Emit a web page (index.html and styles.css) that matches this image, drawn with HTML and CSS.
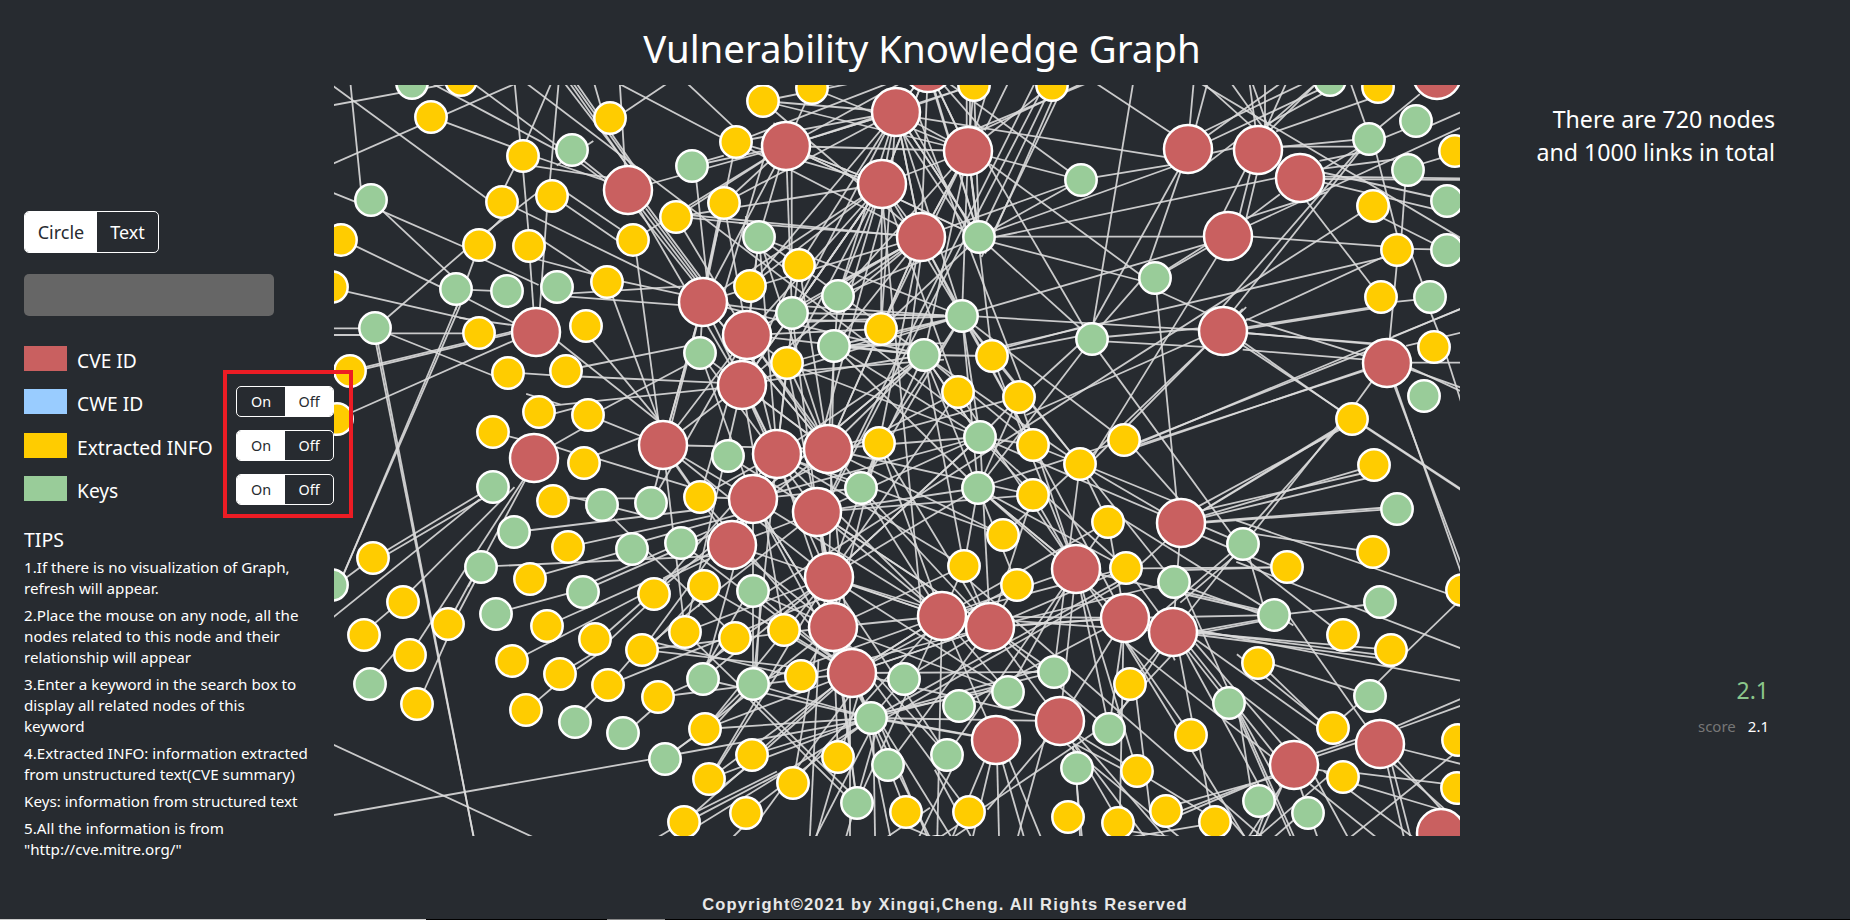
FILE: index.html
```html
<!DOCTYPE html>
<html lang="en">
<head>
<meta charset="utf-8">
<title>Vulnerability Knowledge Graph</title>
<link rel="stylesheet" href="styles.css">
</head>
<body>
<div class="page">
  <header class="title-bar"><h1 class="title">Vulnerability Knowledge Graph</h1></header>
  <main class="content">
    <aside class="sidebar">
      <div class="seg seg-wide">
        <span class="seg-item seg-active">Circle</span>
        <span class="seg-item">Text</span>
      </div>
      <input class="search" type="text" aria-label="Search">
      <div class="filters">
        <ul class="legend">
          <li class="legend-row"><i class="swatch swatch-cve"></i><span class="legend-label">CVE ID</span></li>
          <li class="legend-row"><i class="swatch swatch-cwe"></i><span class="legend-label">CWE ID</span></li>
          <li class="legend-row"><i class="swatch swatch-info"></i><span class="legend-label">Extracted INFO</span></li>
          <li class="legend-row"><i class="swatch swatch-keys"></i><span class="legend-label">Keys</span></li>
        </ul>
        <div class="toggles">
          <div class="seg seg-small">
            <span class="seg-item">On</span>
            <span class="seg-item seg-active">Off</span>
          </div>
          <div class="seg seg-small">
            <span class="seg-item seg-active">On</span>
            <span class="seg-item">Off</span>
          </div>
          <div class="seg seg-small">
            <span class="seg-item seg-active">On</span>
            <span class="seg-item">Off</span>
          </div>
        </div>
        <div class="highlight"></div>
      </div>
      <section class="tips">
        <h2 class="tips-title">TIPS</h2>
        <p>1.If there is no visualization of Graph,<br>refresh will appear.</p>
        <p>2.Place the mouse on any node, all the<br>nodes related to this node and their<br>relationship will appear</p>
        <p>3.Enter a keyword in the search box to<br>display all related nodes of this<br>keyword</p>
        <p>4.Extracted INFO: information extracted<br>from unstructured text(CVE summary)</p>
        <p>Keys: information from structured text</p>
        <p>5.All the information is from<br>"http://cve.mitre.org/"</p>
      </section>
    </aside>
    <svg id="graph" class="graph" viewBox="334 85 1126 751" aria-label="Knowledge graph"></svg>
    <aside class="stats">
      <p class="totals">There are 720 nodes<br>and 1000 links in total</p>
      <div class="score-big">2.1</div>
      <div class="score-row"><span class="score-label">score</span><span class="score-value">2.1</span></div>
    </aside>
  </main>
  <footer class="footer">
    <div class="copyright">Copyright©2021 by Xingqi,Cheng. All Rights Reserved</div>
    <div class="strip"><i class="strip-a"></i><i class="strip-b"></i><i class="strip-c"></i></div>
  </footer>
</div>
<script src="graph.js"></script>
</body>
</html>
```
FILE: styles.css
```css
* { box-sizing: border-box; }
html, body { margin: 0; height: 100%; }
body {
  background: #272b30;
  color: #fff;
  font-family: "Noto Sans", "Open Sans", sans-serif;
  overflow: hidden;
}
.page { display: grid; grid-template-rows: 85px 751px 84px; height: 920px; }
.title-bar { text-align: center; padding-right: 6px; }
.title { margin: 0; padding-top: 22px; font-size: 38.4px; line-height: 52px; font-weight: 400; }
.content { display: grid; grid-template-columns: 334px 1126px 390px; min-height: 0; }
.sidebar { position: relative; z-index: 2; padding: 126px 0 0 24px; }
.seg { display: flex; border: 1px solid #fff; border-radius: 5px; overflow: hidden; }
.seg-item { display: flex; align-items: center; justify-content: center; }
.seg-active { background: #fff; color: #272b30; }
.seg-wide { width: 135px; height: 42px; font-size: 18px; }
.seg-wide .seg-item:first-child { width: 72px; }
.seg-wide .seg-item:last-child { flex: 1; }
.seg-small { width: 98px; height: 31px; font-size: 14.4px; }
.seg-small .seg-item { flex: 1; }
.search { display: block; width: 250px; height: 42px; margin: 21px 0 30px; background: #666; border: 0; border-radius: 5px; }
.filters { position: relative; display: flex; }
.legend { width: 212px; margin: 0; padding: 0; list-style: none; display: flex; flex-direction: column; gap: 18.33px; }
.legend-row { display: flex; align-items: center; height: 25px; font-size: 19.2px; white-space: nowrap; }
.legend-label { padding-top: 4px; }
.swatch { width: 43px; height: 25px; margin-right: 10px; }
.swatch-cve { background: #c96060; }
.swatch-cwe { background: #99ccff; }
.swatch-info { background: #ffcc00; }
.swatch-keys { background: #99cc99; }
.toggles { display: flex; flex-direction: column; gap: 13px; padding-top: 40px; }
.highlight { position: absolute; left: 199px; top: 24px; width: 130px; height: 148px; border: 4px solid #ed1c24; pointer-events: none; }
.tips { margin-top: 20px; white-space: nowrap; }
.tips-title { margin: 0 0 2px; font-size: 19.5px; line-height: 30px; font-weight: 400; }
.tips p { margin: 0 0 6px; font-size: 15.2px; line-height: 21px; }
.graph { display: block; width: 1126px; height: 751px; }
.link { stroke: #dcdcdc; stroke-width: 1.8; opacity: .9; }
.node { stroke: #fff; stroke-width: 2.5; }
.node-r { fill: #c96060; }
.node-y { fill: #ffcc00; }
.node-g { fill: #99cc99; }
.stats { padding: 18px 81px 0 0; text-align: right; }
.totals { margin: 0 -6px 0 0; font-size: 23.2px; line-height: 33px; }
.score-big { margin-top: 503px; font-size: 23px; line-height: 36px; color: #8bc78b; }
.score-row { margin-top: 8px; font-size: 15px; line-height: 21px; }
.score-label { margin-right: 12px; color: #777; }
.footer { display: flex; flex-direction: column; justify-content: flex-end; }
.copyright { flex: 1; padding: 58px 0 0 40px; text-align: center; font: 700 16.5px/20px "Liberation Sans", Arial, sans-serif; letter-spacing: 1.17px; color: #e8e8e8; }
.strip { display: flex; height: 1px; background: #000; }
.strip i { display: block; height: 1px; }
.strip-a { width: 426px; background: #ccc; }
.strip-b { width: 181px; background: #000; }
.strip-c { width: 58px; background: #888; }
```
FILE: graph.js
```js
var NODES = {
  r: "786,146 628,190 703,302 747,335 536,332 742,385 534,458 663,445 777,454 753,499 828,449 817,512 896,112 928,68 968,151 882,184 921,237 1188,149 1258,150 1300,178 1228,236 1223,331 829,577 833,627 732,545 1076,569 1181,523 942,616 990,627 1125,618 1173,632 852,673 1060,721 996,740 1437,75 1387,363 1380,744 1294,765 1441,833",
  y: "461,80 431,117 523,156 610,118 763,101 736,142 724,203 676,217 799,265 633,240 552,196 502,202 341,240 479,245 529,246 607,282 750,286 332,287 586,326 479,333 350,371 787,363 508,373 566,371 337,419 539,412 588,415 493,432 584,463 553,501 700,497 812,88 974,85 1052,85 881,329 992,356 958,392 1019,397 879,443 1033,445 1080,464 1124,440 1033,495 568,547 530,579 654,594 704,586 373,558 403,602 448,624 547,626 595,639 642,650 685,632 735,638 784,630 364,635 410,655 512,661 560,674 608,685 801,676 658,697 417,704 526,710 705,729 752,755 709,779 793,783 746,813 684,822 1108,522 1003,535 964,566 1017,585 1126,568 1287,567 1258,663 1130,684 1191,735 838,757 1137,771 906,812 969,812 1068,817 1166,811 1118,823 1215,822 1378,87 1455,151 1373,206 1397,250 1381,297 1434,347 1352,419 1374,465 1373,552 1343,635 1391,650 1333,728 1343,777 1458,740 1457,788 1462,590 937,852 1255,852",
  g: "412,83 572,150 692,166 759,237 371,200 456,289 507,291 557,287 792,313 375,328 700,353 728,456 493,487 602,505 651,503 1081,180 979,237 838,296 1155,278 962,316 834,346 924,355 1092,339 980,437 861,488 978,488 514,532 632,549 681,543 481,567 583,592 753,591 332,585 496,614 703,679 753,684 370,684 575,722 623,733 665,759 1243,544 1174,582 1274,615 904,679 1054,672 1008,692 959,706 1229,703 871,718 1109,729 947,755 888,765 1077,768 857,803 1259,801 1330,80 1416,121 1369,139 1408,170 1447,201 1447,250 1430,297 1424,396 1397,509 1380,602 1370,696 1308,813"
};

/* [origin x, origin y, x1, y1, x2, y2, ...] traced on a 3x grid */
var TRACES = [
  [330, 80, 12,75,320,18, 12,20,470,355, 62,18,92,320, 12,250,540,18, 355,130,530,195, 630,235,820,300, 320,18,680,210, 440,18,820,300, 555,18,570,180, 660,18,590,180, 685,18,660,300, 710,18,895,260, 725,18,890,255, 735,18,900,250, 745,18,910,255, 600,18,800,170, 12,340,75,365, 160,395,400,500, 160,395,400,620, 80,500,330,620, 30,630,400,715, 400,715,545,735, 12,745,85,745, 12,765,85,765, 185,760,400,760, 185,765,485,885, 175,710,400,515, 145,795,235,1260, 110,865,545,760, 110,860,545,755, 70,995,545,785, 380,680,135,1260, 430,545,380,680, 420,660,545,725, 430,630,480,632, 550,270,525,320, 580,280,595,450, 600,540,610,680, 650,400,630,680, 480,450,520,410, 490,440,620,340, 570,390,1040,620, 720,345,860,440, 715,380,860,480, 650,490,780,575, 475,545,615,610, 630,540,780,580, 880,605,1040,640, 720,640,1050,620, 720,650,1050,675, 850,655,985,1020, 920,530,985,1020, 930,400,1080,590, 945,400,1090,590, 955,395,1100,590, 965,395,1110,590, 1100,310,1130,590, 1165,420,1130,590, 790,785,985,1020, 760,860,1060,800, 585,880,660,885, 760,890,1165,908, 690,790,980,1020, 825,985,1060,860, 830,960,1165,925, 825,1025,925,1065, 680,1090,750,1050, 690,1105,720,1115, 675,1000,730,985, 600,945,680,970, 540,1070,560,1075, 810,1120,925,1075, 815,1140,1060,1215, 1040,1160,1075,1210, 1135,240,1170,230, 1090,415,1240,430, 1240,430,1440,445, 1170,425,1130,590, 1300,515,1410,600, 1290,275,1330,140, 1385,280,1385,510, 1270,500,1250,420, 1210,140,1080,18, 1170,170,880,18, 870,18,885,260, 795,18,810,70, 885,95,1000,18, 780,190,690,250, 590,255,820,290, 770,250,820,290],
  [810, 80, 335,115,1060,230, 870,18,1070,150, 968,18,850,730, 865,290,1080,255, 560,450,1075,265, 560,470,1180,340, 565,470,1180,470, 540,260,815,730, 550,260,985,580, 560,490,985,600, 1060,640,1170,690, 1110,280,1020,540, 1100,280,850,730, 1085,560,1180,500, 1085,565,1180,510, 1215,540,850,1130, 510,690,1180,495, 985,610,880,730, 1040,640,1100,1260, 510,710,1170,750, 595,810,800,770, 595,800,800,745, 895,770,1170,745, 895,785,1170,800, 870,820,1190,1260, 1300,690,850,1120, 1290,695,860,1130, 680,910,800,800, 660,1000,1180,770, 985,1090,1440,900, 985,1100,1440,945, 1310,720,1440,660, 1315,745,1440,725, 1315,760,1440,770, 1305,800,1440,890, 1200,1260,1440,1130, 860,1170,1080,1260, 985,1120,1100,1250, 1140,130,1150,18, 1160,130,1190,18, 1190,150,1440,30, 1195,165,1400,18, 1205,180,1440,70, 1350,130,1270,18, 1370,130,1330,18, 1390,140,1440,90, 1320,135,1190,18, 1200,220,1270,205, 1205,240,1270,190, 1300,280,1240,400, 1320,280,1290,400, 1340,285,1310,410, 1400,350,1320,410, 540,130,810,18, 560,130,800,18, 530,140,590,18, 500,135,535,18, 470,135,470,60, 480,135,480,60, 380,60,470,350, 440,60,510,140, 750,40,520,520, 740,30,530,510, 670,18,380,600, 690,40,400,600, 330,120,450,430, 320,160,480,440, 300,190,480,460, 220,390,260,810, 330,550,300,780, 220,390,130,720, 265,510,100,600, 0,440,260,465, 0,680,390,705, 0,720,180,725, 135,795,300,790, 400,710,130,720, 390,790,130,800, 390,840,130,860],
  [330, 490, 50,230,150,0, 12,380,440,35, 50,262,80,240, 175,178,445,15, 185,185,450,30, 225,0,430,1035, 245,300,545,0, 140,395,175,365, 265,455,560,0, 150,540,210,470, 285,595,350,450, 375,360,440,240, 390,360,445,255, 420,280,570,0, 500,228,1000,205, 605,120,1100,60, 765,160,1130,80, 650,250,860,190, 550,355,715,310, 810,280,1130,140, 800,270,1120,130, 700,385,925,285, 595,490,925,320, 835,425,1000,280, 845,445,1010,290, 740,520,790,490, 750,530,800,495, 630,625,665,595, 770,650,800,620, 870,545,900,510, 885,565,1440,340, 985,485,1380,530, 960,470,1120,300, 920,700,960,665, 1030,605,1075,585, 1050,770,1080,750, 12,975,950,810, 12,765,595,1035, 1055,790,1440,720, 1160,680,1220,620, 1170,690,1230,625, 1170,820,1350,540, 1190,880,1240,840, 1110,960,1330,850, 1110,975,1340,855, 1115,1000,1440,800, 995,1035,1020,1020, 1215,1035,1235,1015, 1280,1000,1440,780, 1310,765,1440,650, 1270,640,1440,810, 1110,470,1440,790, 1145,510,1235,420, 720,25,1000,25, 720,20,920,70, 860,95,1020,250, 950,150,1130,100, 1000,270,1130,210, 1010,260,1140,190, 1110,340,1130,300, 1150,500,1440,570, 1230,350,1140,510, 1140,510,1440,300, 1290,350,1280,530],
  [810, 490, 520,820,430,1035, 540,825,490,1035, 562,830,567,1035, 580,825,640,1035, 600,815,690,1035, 790,760,900,950, 810,770,1000,870, 820,745,1040,880, 800,770,1000,1035, 830,770,1060,1035, 790,780,815,1035, 780,770,1100,1035, 1110,500,1145,685, 1130,490,1300,800, 1150,485,1400,800, 1165,470,1440,790, 1160,450,1440,650, 1165,430,1345,395, 1165,425,1440,460, 1165,435,1440,470, 1090,500,1050,400, 1135,210,1440,400, 1180,140,1440,250, 1185,95,1440,75, 1190,80,1440,20, 1180,60,1440,0, 1180,110,1250,140, 1060,160,930,280, 1000,235,1385,232, 1140,310,1350,360, 1130,320,1300,700, 1260,210,1120,330, 1250,200,1040,380, 1120,960,1300,890, 1110,975,1380,860, 980,630,1020,960, 940,450,930,960, 960,480,1230,920, 970,475,1270,710, 1290,690,1320,880, 1170,780,1200,950, 810,1035,800,870, 930,660,1100,480, 1310,1000,1350,1035, 1360,980,1340,1035, 1420,880,1350,1035, 1440,1000,1400,1035, 1270,1000,1300,1035, 970,1025,1040,1035, 1120,1015,1000,1035, 700,760,540,950, 640,980,700,760, 25,520,0,1035, 120,620,120,1035, 140,630,20,1035, 190,730,195,1035, 200,720,110,1035, 215,715,350,1035, 225,720,420,1035, 180,740,240,1035, 290,1010,350,1035, 350,960,240,1035, 100,880,20,1035, 420,850,330,1035, 380,850,480,1035, 470,1015,440,1035, 540,940,400,1035, 235,680,480,540, 235,665,690,540, 230,660,410,560, 235,690,480,735, 230,665,560,600],
  [1240, 80, 130,200,340,180, 90,130,220,18, 120,150,380,60, 240,45,85,130, 335,18,375,130, 30,18,45,130, 75,18,75,130, 135,18,85,130, 420,140,530,50, 440,170,490,150, 575,135,655,100, 410,225,470,460, 255,290,655,295, 255,297,655,300, 255,265,450,240, 550,250,600,235, 260,310,575,385, 260,280,575,350, 470,360,655,470, 430,415,570,485, 40,470,420,498, 520,507,570,508, 495,320,485,460, 205,370,390,610, 470,560,450,770, 515,525,545,605, 30,740,375,685, 470,665,520,660, 15,630,425,535, 575,705,595,755, 620,830,655,940, 30,760,365,790, 30,720,365,825, 20,810,365,838, 15,790,290,985, 0,965,365,820, 0,995,365,875, 395,905,355,960, 470,765,655,690, 510,795,655,760, 515,848,655,848, 515,870,655,920, 515,865,655,930, 470,925,545,1140, 385,1045,530,1140, 290,1045,135,1140, 290,1050,210,1140, 110,200,350,200, 260,260,355,205, 250,240,350,220, 360,400,0,630, 350,215,0,620, 350,225,20,640, 40,430,300,310, 30,410,250,340],
  [1240, 450, 0,115,190,0, 50,235,235,0, 0,165,355,60, 0,210,420,180, 30,250,355,300, 0,215,650,440, 480,0,655,115, 535,0,655,320, 0,355,95,352, 20,330,270,525, 30,330,65,450, 0,340,650,590, 155,490,375,465, 0,470,55,490, 0,520,55,510, 155,510,370,815, 0,565,650,690, 0,560,400,595, 505,600,650,460, 420,690,490,620, 105,645,340,720, 0,620,230,805, 95,675,225,800, 310,800,345,770, 0,730,180,870, 0,790,115,1000, 240,915,345,880, 240,905,345,870, 490,820,655,750, 490,830,655,770, 495,900,655,940, 650,905,340,1155, 445,960,490,1155, 460,960,510,1155, 480,940,610,1085, 470,950,640,1100, 120,1015,30,1155, 240,1000,60,1155, 230,990,320,1155, 180,1010,230,1155, 260,970,510,1155, 360,970,605,1000, 355,1005,590,1075, 0,1010,90,985, 0,810,150,1155, 240,960,345,980, 220,1010,400,1155]
];

/* the dense middle of the graph: hub [x, y, how many links, reach] */
var HUBS = [
  [703,302,8,240],[747,335,10,240],[742,385,10,260],[663,445,4,200],[777,454,12,260],[753,499,12,250],
  [828,449,14,240],[817,512,14,240],[896,112,16,240],[928,68,10,230],[968,151,14,220],[882,184,14,250],
  [921,237,16,250],[786,146,14,220],[829,577,16,240],[833,627,16,240],[852,673,18,240],[942,616,18,240],
  [990,627,18,240],[1076,569,14,230],[1125,618,8,200],[1173,632,6,180],[871,718,12,200],[979,237,10,220],
  [962,316,12,220],[924,355,12,230],[980,437,10,230],[978,488,10,220],[1080,464,8,230]
];

var SVG_NS = "http://www.w3.org/2000/svg";
var graph = document.getElementById("graph");

var all = [];
Object.keys(NODES).forEach(function (type) {
  NODES[type].split(" ").forEach(function (pair) {
    var p = pair.split(",");
    all.push({ type: type, x: +p[0], y: +p[1], r: type === "r" ? 24 : 15.7 });
  });
});

function nodeAt(x, y, slack) {
  for (var i = 0; i < all.length; i++) {
    if (Math.hypot(all[i].x - x, all[i].y - y) < all[i].r + slack) return all[i];
  }
  return null;
}

/* a link ends at a node or runs off the canvas, never in empty space */
function settle(x, y, ux, uy) {
  var near = nodeAt(x, y, 7);
  if (near) return [x + ux * 4, y + uy * 4];
  while (x > 330 && x < 1464 && y > 81 && y < 840) {
    x += ux * 3;
    y += uy * 3;
    if (nodeAt(x, y, -4)) break;
  }
  return [x, y];
}

function addSegment(x1, y1, x2, y2) {
  var el = document.createElementNS(SVG_NS, "line");
  el.setAttribute("class", "link");
  el.setAttribute("x1", x1.toFixed(1));
  el.setAttribute("y1", y1.toFixed(1));
  el.setAttribute("x2", x2.toFixed(1));
  el.setAttribute("y2", y2.toFixed(1));
  graph.appendChild(el);
}

function addLine(x1, y1, x2, y2) {
  var len = Math.hypot(x2 - x1, y2 - y1) || 1;
  var ux = (x2 - x1) / len, uy = (y2 - y1) / len;
  var a = settle(x1, y1, -ux, -uy), b = settle(x2, y2, ux, uy);
  addSegment(a[0], a[1], b[0], b[1]);
}

TRACES.forEach(function (t) {
  for (var i = 2; i + 3 < t.length; i += 4) {
    addLine(t[0] + t[i] / 3, t[1] + t[i + 1] / 3, t[0] + t[i + 2] / 3, t[1] + t[i + 3] / 3);
  }
});

var seed = 20210;
function rnd() {
  seed = (seed * 16807) % 2147483647;
  return seed / 2147483647;
}

/* regions of the picture that stay open, so hub links skip them */
function crossesOpen(a, b) {
  for (var s = 0; s <= 1; s += 0.1) {
    var x = a[0] + (b.x - a[0]) * s, y = a[1] + (b.y - a[1]) * s;
    if (x < 640 && y > 500) return true;
    if (x > 1130 && y > 380 && y < 470) return true;
    if (x > 1110 && y > 170 && y < 240 && x < 1170) return true;
    if (x < 620) return true;
  }
  return false;
}

HUBS.forEach(function (h) {
  var near = all.filter(function (n) {
    var d = Math.hypot(n.x - h[0], n.y - h[1]);
    return d > 30 && d < h[3] && !crossesOpen(h, n);
  });
  for (var i = 0; i < h[2] && near.length; i++) {
    var n = near.splice(Math.floor(rnd() * near.length), 1)[0];
    addSegment(h[0], h[1], n.x, n.y);
  }
});

all.forEach(function (n) {
  var el = document.createElementNS(SVG_NS, "circle");
  el.setAttribute("class", "node node-" + n.type);
  el.setAttribute("cx", n.x);
  el.setAttribute("cy", n.y);
  el.setAttribute("r", n.r);
  graph.appendChild(el);
});
```
